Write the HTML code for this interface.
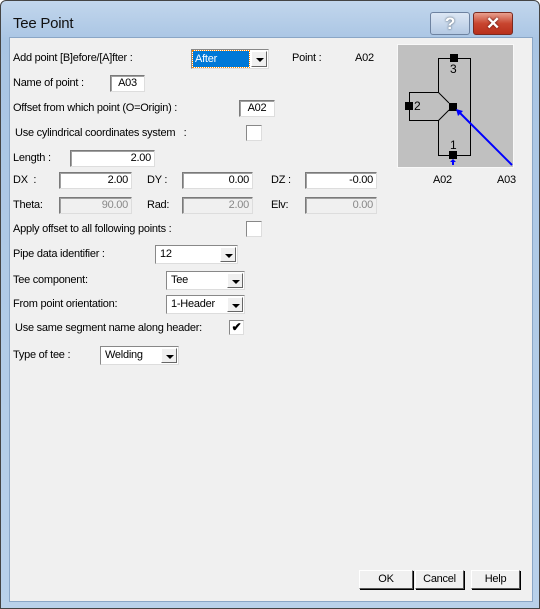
<!DOCTYPE html><html><head><style>
body{margin:0;width:540px;height:609px;overflow:hidden;font-family:"Liberation Sans",sans-serif;font-size:11px;letter-spacing:-0.25px;color:#000}
.win{position:absolute;left:0;top:0;width:538px;height:607px;border:1px solid #444;border-radius:6px 6px 0 0;background:linear-gradient(#c2d6ec,#a9c5e4 40px,#b9d1ea)}
.client{position:absolute;left:9px;top:37px;width:522px;height:563px;background:#f0f0f0;border:1px solid #8aa6c6}
.t{position:absolute;white-space:nowrap;line-height:14px}
.in{position:absolute;background:#fff;border:1px solid #7a7a7a;border-right-color:#ddd;border-bottom-color:#ddd;box-shadow:inset 1px 1px 0 #a0a0a0;box-sizing:border-box;text-align:right;padding-right:3px;line-height:15px}
.dis{background:#f0f0f0;color:#888}
.cb{position:absolute;width:16px;height:16px;background:#fff;border:1px solid #888;border-right-color:#ddd;border-bottom-color:#ddd;box-sizing:border-box}
.combo{position:absolute;background:#fff;border:1px solid #888;border-right-color:#ddd;border-bottom-color:#ddd;box-sizing:border-box;padding-left:4px;line-height:16px}
.combo .ar{position:absolute;right:1px;top:1px;bottom:1px;width:16px;background:#f0f0f0;border:1px solid #fff;border-right-color:#666;border-bottom-color:#666;box-sizing:border-box}
.combo .ar:after{content:"";position:absolute;left:4px;top:6px;border:3px solid transparent;border-top:4px solid #000;border-left-width:4px;border-right-width:4px}
.btn{position:absolute;height:19px;background:#f0f0f0;border:1px solid #fff;border-right-color:#555;border-bottom-color:#555;box-shadow:1px 1px 0 #000;box-sizing:border-box;text-align:center;line-height:17px}
</style></head><body>
<div class="win">
<div class="t" style="left:12px;top:14px;font-size:15px;line-height:18px;color:#111">Tee Point</div>
<div style="position:absolute;left:429px;top:11px;width:38px;height:21px;border:1px solid #6d82a0;border-radius:3px;background:linear-gradient(#dce7f4,#b4c9e3);text-align:center;color:#fff;font-weight:bold;font-size:17px;line-height:21px;text-shadow:0 0 2px #345">?</div>
<div style="position:absolute;left:472px;top:11px;width:38px;height:21px;border:1px solid #7a2a20;border-radius:3px;background:linear-gradient(#e8a08f,#c8452f 50%,#b8301c);text-align:center;color:#fff;font-weight:bold;font-size:17px;line-height:21px;text-shadow:0 0 2px #400">✕</div>
</div>
<div class="client"></div>
<div class="t" style="left:13px;top:51px">Add point [B]efore/[A]fter :</div>
<div class="combo" style="left:191px;top:49px;width:78px;height:20px;padding:1px"><div style="background:#0078d7;color:#fff;width:54px;height:16px;outline:1px dotted #f80;padding-left:2px;line-height:16px">After</div><div class="ar"></div></div>
<div class="t" style="left:292px;top:51px">Point :</div>
<div class="t" style="left:355px;top:51px">A02</div>
<div class="t" style="left:13px;top:76px">Name of point :</div>
<div class="in" style="left:110px;top:75px;width:35px;height:17px;text-align:center;padding:0">A03</div>
<div class="t" style="left:13px;top:101px">Offset from which point (O=Origin) :</div>
<div class="in" style="left:239px;top:100px;width:36px;height:17px;text-align:center;padding:0">A02</div>
<div class="t" style="left:15px;top:126px">Use cylindrical coordinates system &nbsp;&nbsp;:</div>
<div class="cb" style="left:246px;top:125px"></div>
<div class="t" style="left:13px;top:151px">Length :</div>
<div class="in" style="left:70px;top:150px;width:85px;height:17px">2.00</div>
<div class="t" style="left:13px;top:173px">DX &nbsp;:</div>
<div class="in" style="left:59px;top:172px;width:73px;height:17px">2.00</div>
<div class="t" style="left:147px;top:173px">DY :</div>
<div class="in" style="left:182px;top:172px;width:71px;height:17px">0.00</div>
<div class="t" style="left:271px;top:173px">DZ :</div>
<div class="in" style="left:305px;top:172px;width:72px;height:17px">-0.00</div>
<div class="t" style="left:13px;top:198px">Theta:</div>
<div class="in dis" style="left:59px;top:197px;width:73px;height:17px">90.00</div>
<div class="t" style="left:147px;top:198px">Rad:</div>
<div class="in dis" style="left:182px;top:197px;width:71px;height:17px">2.00</div>
<div class="t" style="left:271px;top:198px">Elv:</div>
<div class="in dis" style="left:305px;top:197px;width:72px;height:17px">0.00</div>
<div class="t" style="left:13px;top:222px">Apply offset to all following points :</div>
<div class="cb" style="left:246px;top:221px"></div>
<div class="t" style="left:13px;top:247px">Pipe data identifier :</div>
<div class="combo" style="left:155px;top:245px;width:83px;height:19px">12<div class="ar"></div></div>
<div class="t" style="left:13px;top:273px">Tee component:</div>
<div class="combo" style="left:166px;top:271px;width:79px;height:19px">Tee<div class="ar"></div></div>
<div class="t" style="left:13px;top:297px">From point orientation:</div>
<div class="combo" style="left:166px;top:295px;width:79px;height:19px">1-Header<div class="ar"></div></div>
<div class="t" style="left:15px;top:321px">Use same segment name along header:</div>
<div class="cb" style="left:229px;top:320px;width:15px;height:15px;font-size:12px;line-height:13px;text-align:center;font-weight:bold">✔</div>
<div class="t" style="left:13px;top:348px">Type of tee :</div>
<div class="combo" style="left:100px;top:346px;width:79px;height:19px">Welding<div class="ar"></div></div>
<svg style="position:absolute;left:0;top:0" width="540" height="609">
<rect x="397.5" y="44.5" width="116" height="123" fill="#c0c0c0" stroke="#f8f8f8"/>
<g stroke="#000" fill="none" stroke-width="1">
<path d="M438.5 92V58.5H470.5V155.5H438.5V120.5H409.5V92.5H438.5"/>
<path d="M438 92L449 103M438 121L449 110"/>
</g>
<g fill="#000"><rect x="450" y="54" width="8" height="8"/><rect x="405" y="102" width="8" height="8"/><rect x="449" y="103" width="8" height="8"/><rect x="449" y="151" width="8" height="8"/></g>
<g font-family="Liberation Sans" font-size="12"><text x="450" y="73">3</text><text x="414" y="110">2</text><text x="450" y="149">1</text></g>
<path d="M512 165L458 111" stroke="#0000ff" stroke-width="2"/>
<path d="M456 109l2 7 5-5z" fill="#0000ff"/>
<path d="M453 159l-3 3h2v3h2v-3h2z" fill="#0000ff"/>
</svg>
<div class="t" style="left:433px;top:173px">A02</div>
<div class="t" style="left:497px;top:173px">A03</div>
<div class="btn" style="left:359px;top:570px;width:54px">OK</div>
<div class="btn" style="left:415px;top:570px;width:49px">Cancel</div>
<div class="btn" style="left:471px;top:570px;width:49px">Help</div>
</body></html>
